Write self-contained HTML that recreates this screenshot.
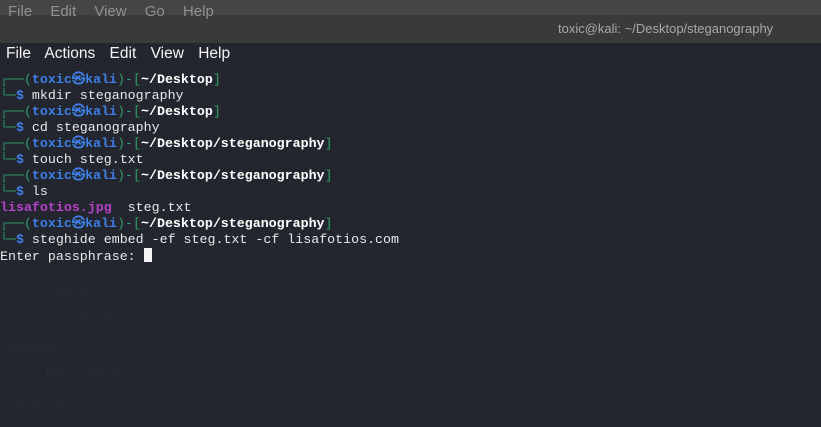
<!DOCTYPE html>
<html><head><style>
body{margin:0;width:821px;height:427px;overflow:hidden;background:#23262e;font-family:"Liberation Sans",sans-serif;position:relative}
.top{position:absolute;left:0;top:0;width:821px;height:43px;background:#393a3c}
.top1{position:absolute;left:0;top:0;width:821px;height:15px;background:#444546}
.m1{position:absolute;top:3px;left:8px;color:#909090;font-size:15px;word-spacing:14px}
.title{position:absolute;top:21px;left:558px;color:#a8a8a8;font-size:13px}
.m2{position:absolute;top:45px;left:6px;color:#f4f4f4;font-size:15.5px;word-spacing:10px}
.term{position:absolute;top:72px;left:0;font-family:"Liberation Mono",monospace;font-size:13.3px;line-height:16px;color:#e8e8e8;white-space:pre}
.g{color:#2f9e6b}.b{color:#3f7fe8;font-weight:bold}.w{color:#fff;font-weight:bold}.p{color:#b342c8;font-weight:bold}
.cur{display:inline-block;width:8px;height:14px;background:#f4f4f4;vertical-align:-2px}
.ghost{position:absolute;color:#282b33;font-size:15px}
</style></head><body>
<div class="top"></div><div class="top1"></div>
<div class="m1">File Edit View Go Help</div>
<div class="title">toxic@kali: ~/Desktop/steganography</div>
<div class="m2">File Actions Edit View Help</div>
<div class="ghost" style="top:285px;left:45px">Videos</div>
<div class="ghost" style="top:311px;left:45px">Downloads</div>
<div class="ghost" style="top:338px;left:8px">Devices</div>
<div class="ghost" style="top:365px;left:45px">File System</div>
<div class="ghost" style="top:393px;left:8px">Network</div>
<div class="term"><span class="g">┌──(</span><span class="b">toxic㉿kali</span><span class="g">)-[</span><span class="w">~/Desktop</span><span class="g">]</span>
<span class="g">└─</span><span class="b">$</span> mkdir steganography
<span class="g">┌──(</span><span class="b">toxic㉿kali</span><span class="g">)-[</span><span class="w">~/Desktop</span><span class="g">]</span>
<span class="g">└─</span><span class="b">$</span> cd steganography
<span class="g">┌──(</span><span class="b">toxic㉿kali</span><span class="g">)-[</span><span class="w">~/Desktop/steganography</span><span class="g">]</span>
<span class="g">└─</span><span class="b">$</span> touch steg.txt
<span class="g">┌──(</span><span class="b">toxic㉿kali</span><span class="g">)-[</span><span class="w">~/Desktop/steganography</span><span class="g">]</span>
<span class="g">└─</span><span class="b">$</span> ls
<span class="p">lisafotios.jpg</span>  steg.txt
<span class="g">┌──(</span><span class="b">toxic㉿kali</span><span class="g">)-[</span><span class="w">~/Desktop/steganography</span><span class="g">]</span>
<span class="g">└─</span><span class="b">$</span> steghide embed -ef steg.txt -cf lisafotios.com
Enter passphrase: <span class="cur"></span></div>
</body></html>
